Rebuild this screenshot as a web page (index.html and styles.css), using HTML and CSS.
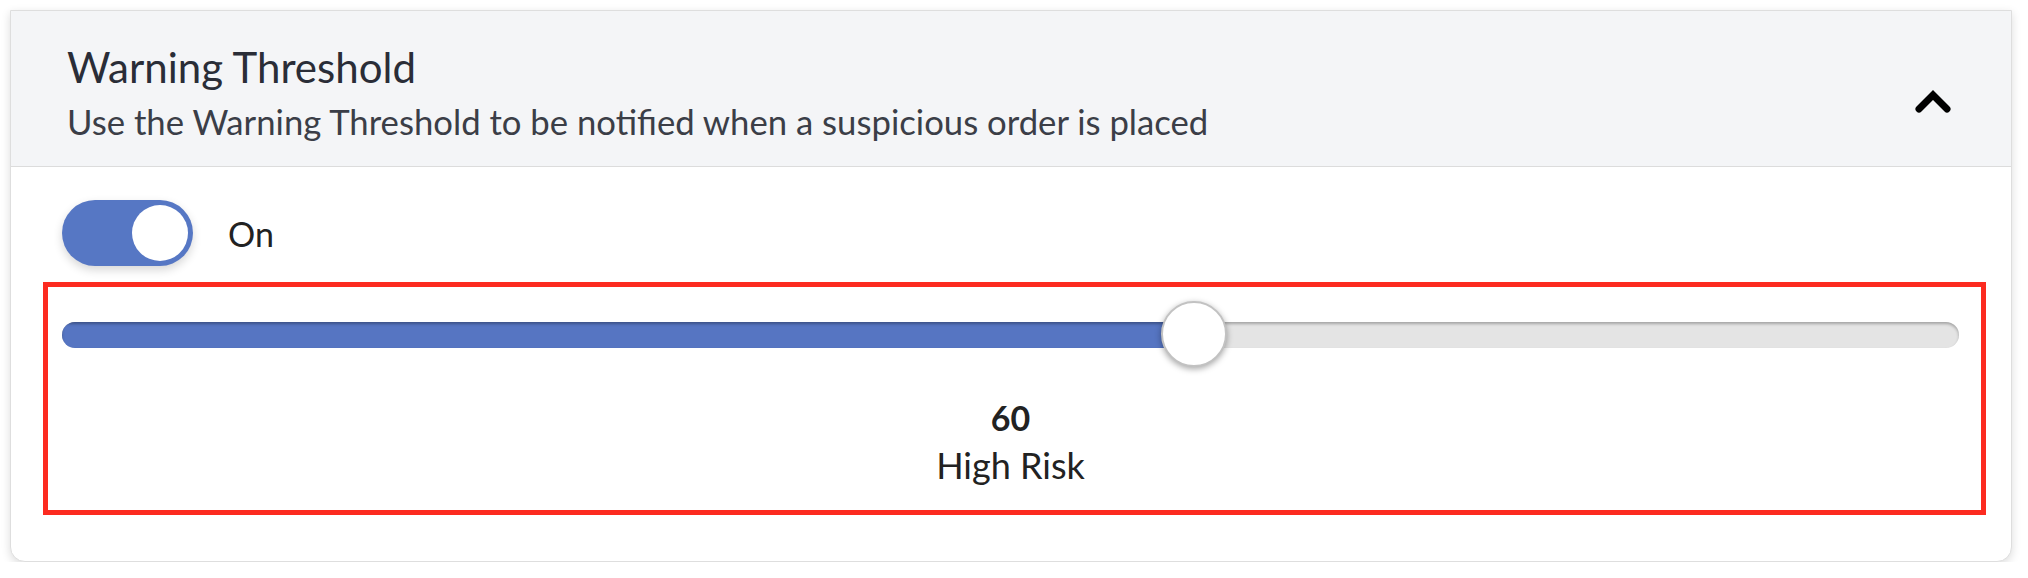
FILE: index.html
```html
<!DOCTYPE html>
<html lang="en">
<head>
    <meta charset="UTF-8">
    <meta name="viewport" content="width=device-width, initial-scale=1.0">
    <title>Warning Threshold</title>
    <link rel="stylesheet" href="styles.css">
</head>
<body>
    <div class="card">
        <div class="card-header">
            <div class="header-text">
                <h2 class="title">Warning Threshold</h2>
                <p class="subtitle">Use the Warning Threshold to be notified when a suspicious order is placed</p>
            </div>
            <svg class="chevron" width="36" height="24" viewBox="0 0 36 24">
                <path d="M4 20 L18 6 L32 20" fill="none" stroke="#000" stroke-width="7" stroke-linecap="round" stroke-linejoin="miter"/>
            </svg>
        </div>
        <div class="card-body">
            <div class="toggle-row">
                <div class="toggle on"><div class="knob"></div></div>
                <span class="toggle-label">On</span>
            </div>
            <div class="threshold">
                <div class="slider">
                    <div class="track">
                        <div class="fill" style="width: calc((100% - 66px) * 0.6 + 33px);"></div>
                    </div>
                    <div class="thumb" style="left: calc((100% - 66px) * 0.6);"></div>
                </div>
                <div class="value">60</div>
                <div class="risk">High Risk</div>
            </div>
        </div>
    </div>
</body>
</html>
```

FILE: styles.css
```css
body {
    margin: 0;
    padding: 10px 16px 0 10px;
    font-family: Lato, "Open Sans", sans-serif;
    background-color: #fff;
}
.card {
    border: 1px solid #dedede;
    border-radius: 0 0 15px 15px;
    box-shadow: 0 3px 10px rgba(0, 0, 0, 0.14);
    background-color: #fff;
}
.card-header {
    display: flex;
    align-items: center;
    justify-content: space-between;
    padding: 32px 60px 25px 56px;
    background-color: #f4f5f7;
    border-bottom: 1px solid #dcdcdc;
}
.title {
    margin: 0;
    font-size: 42px;
    font-weight: 400;
    line-height: 48px;
    color: #2a2d37;
}
.subtitle {
    margin: 12px 0 0;
    font-size: 34.7px;
    line-height: 38px;
    color: #3b3e47;
}
.chevron {
    display: block;
    margin-top: 18px;
}
.card-body {
    padding: 33px 25px 46px 32px;
}
.toggle-row {
    display: flex;
    align-items: center;
    gap: 35px;
    margin-left: 19px;
}
.toggle {
    display: flex;
    align-items: center;
    justify-content: flex-end;
    width: 131px;
    height: 66px;
    padding: 0 5px;
    box-sizing: border-box;
    border-radius: 33px;
    background-color: #5677c4;
    box-shadow: 0 4px 10px rgba(0, 0, 0, 0.16);
}
.knob {
    width: 56px;
    height: 56px;
    border-radius: 50%;
    background-color: #fff;
}
.toggle-label {
    font-size: 34px;
    color: #222;
}
.threshold {
    margin-top: 16px;
    padding: 14px 22px 20px 14px;
    border: 5px solid #fc2b20;
    text-align: center;
}
.slider {
    position: relative;
    padding: 21px 0 19px;
}
.track {
    height: 26px;
    border-radius: 13px;
    background-color: #e4e4e4;
    box-shadow: inset 0 2px 3px rgba(0, 0, 0, 0.28);
    overflow: hidden;
}
.fill {
    height: 100%;
    background-color: #5675c2;
    box-shadow: inset 0 2px 3px rgba(0, 0, 0, 0.3);
}
.thumb {
    position: absolute;
    top: 0;
    width: 66px;
    height: 66px;
    box-sizing: border-box;
    border-radius: 50%;
    border: 2px solid #c2c2c2;
    background-color: #fff;
    box-shadow: 0 2px 6px rgba(0, 0, 0, 0.35);
}
.value {
    margin-top: 29px;
    font-size: 34px;
    font-weight: 700;
    line-height: 44px;
    color: #222;
}
.risk {
    font-size: 36px;
    line-height: 50px;
    color: #222;
}
```
